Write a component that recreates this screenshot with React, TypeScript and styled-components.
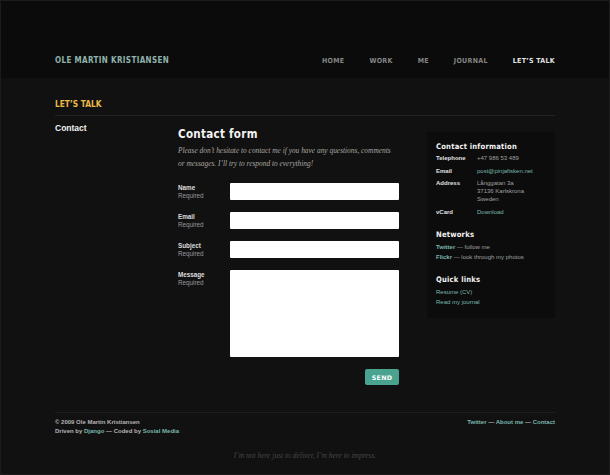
import React from 'react'
import styled, { createGlobalStyle } from 'styled-components'

const GlobalStyle = createGlobalStyle`
  html, body {
    margin: 0;
    padding: 0;
    background: #111111;
  }
  body {
    font-family: "Liberation Sans", Arial, sans-serif;
    color: #cccccc;
  }
  a {
    text-decoration: none;
  }
`

const Page = styled.div`
  width: 610px;
  height: 475px;
  box-sizing: border-box;
  border: 1px solid #1c1c1c;
  background: #111111;
  overflow: hidden;
`

const Header = styled.header`
  height: 77px;
  background: #0b0b0b;
  padding: 0 54px 12px;
  display: flex;
  align-items: flex-end;
  justify-content: space-between;
  box-sizing: border-box;
  line-height: 10px;
`

const Logo = styled.div`
  font-family: "DejaVu Sans Condensed", "DejaVu Sans", sans-serif;
  font-weight: bold;
  font-size: 8px;
  letter-spacing: 0.35px;
  color: #8fb3ab;
`

const Nav = styled.nav`
  display: flex;
  gap: 25px;
`

const NavItem = styled.a<{ $active?: boolean }>`
  font-family: "DejaVu Sans Condensed", "DejaVu Sans", sans-serif;
  font-weight: bold;
  font-size: 7px;
  letter-spacing: 0.3px;
  color: ${p => (p.$active ? '#e2e2e2' : '#858585')};
`

const Main = styled.main`
  padding: 0 54px;
`

const SectionTitle = styled.h1`
  margin: 0;
  padding: 21px 0 6px;
  line-height: 10px;
  font-family: "DejaVu Sans Condensed", "DejaVu Sans", sans-serif;
  font-weight: 900;
  font-size: 8.3px;
  color: #e9b949;
  border-bottom: 1px solid #222222;
`

const Columns = styled.div`
  display: grid;
  grid-template-columns: 123px 221px 1fr;
  align-items: start;
  padding-top: 7px;
`

const SubNav = styled.div`
  font-weight: bold;
  font-size: 8.5px;
  line-height: 10px;
  color: #f0f0f0;
`

const FormCol = styled.div`
  display: flex;
  flex-direction: column;
`

const FormTitle = styled.h2`
  margin: 4px 0 0;
  line-height: 14px;
  font-family: "DejaVu Sans Condensed", "DejaVu Sans", sans-serif;
  font-weight: bold;
  font-size: 11.5px;
  letter-spacing: 0.3px;
  color: #f4f4f4;
`

const Intro = styled.p`
  margin: 3px 0 13px;
  font-family: "Liberation Serif", "Times New Roman", serif;
  font-style: italic;
  font-size: 7.4px;
  line-height: 13px;
  color: #a9a5a0;
`

const Field = styled.div`
  display: grid;
  grid-template-columns: 52px 169px;
  align-items: start;
  margin-bottom: 12px;
`

const LabelBox = styled.label`
  display: flex;
  flex-direction: column;
  padding-top: 1px;
`

const LabelName = styled.span`
  font-weight: bold;
  font-size: 6.3px;
  line-height: 8px;
  color: #dddddd;
`

const LabelNote = styled.span`
  font-size: 6.3px;
  line-height: 8px;
  color: #9a9a9a;
`

const Input = styled.div<{ $height: number }>`
  height: ${p => p.$height}px;
  background: #ffffff;
  border-radius: 1px;
`

const Actions = styled.div`
  display: flex;
  justify-content: flex-end;
`

const SendButton = styled.button`
  width: 34px;
  height: 16px;
  border: none;
  border-radius: 2px;
  background: #4aa38f;
  color: #ffffff;
  font-family: "DejaVu Sans", sans-serif;
  font-weight: bold;
  font-size: 6.3px;
  letter-spacing: 0.3px;
  padding: 0;
`

const Sidebar = styled.aside`
  justify-self: end;
  width: 128px;
  margin-top: 9px;
  background: #0c0c0c;
  padding: 10px 9px 0;
  height: 186px;
  box-sizing: border-box;
`

const SideTitle = styled.h3`
  margin: 0;
  line-height: 9px;
  font-family: "DejaVu Sans Condensed", "DejaVu Sans", sans-serif;
  font-weight: bold;
  font-size: 7.6px;
  letter-spacing: 0.2px;
  color: #f2f2f2;
`

const InfoTable = styled.div`
  display: grid;
  grid-template-columns: 41px 1fr;
  row-gap: 4.5px;
  margin: 3px 0 14px;
`

const InfoKey = styled.span`
  font-weight: bold;
  font-size: 6px;
  line-height: 8px;
  color: #e0e0e0;
`

const InfoValue = styled.span`
  font-size: 6px;
  line-height: 8px;
  color: #a0a0a0;
`

const Link = styled.a`
  color: #7ab6ac;
`

const BoldLink = styled.a`
  color: #7ab6ac;
  font-weight: bold;
`

const SideList = styled.div`
  display: flex;
  flex-direction: column;
  gap: 2.5px;
  margin-top: 4px;
`

const SideLine = styled.div`
  font-size: 6px;
  line-height: 8px;
  color: #a0a0a0;
`

const SideGroup = styled.div`
  margin-bottom: 13.5px;
`

const Footer = styled.footer`
  margin: 27px 54px 0;
  border-top: 1px solid #1e1e1e;
  padding-top: 5px;
  display: flex;
  justify-content: space-between;
  font-weight: bold;
  font-size: 6px;
  line-height: 9px;
  color: #b4b4b4;
`

const Tagline = styled.p`
  margin: 15px 0 0;
  line-height: 9px;
  text-align: center;
  font-family: "Liberation Serif", "Times New Roman", serif;
  font-style: italic;
  font-size: 7.5px;
  color: #474747;
`

const fields = [
  { name: 'Name', height: 17 },
  { name: 'Email', height: 17 },
  { name: 'Subject', height: 17 },
  { name: 'Message', height: 87 },
]

const App = () => {
  return (
    <>
      <GlobalStyle />
      <Page>
        <Header>
          <Logo>OLE MARTIN KRISTIANSEN</Logo>
          <Nav>
            <NavItem>HOME</NavItem>
            <NavItem>WORK</NavItem>
            <NavItem>ME</NavItem>
            <NavItem>JOURNAL</NavItem>
            <NavItem $active>LET’S TALK</NavItem>
          </Nav>
        </Header>
        <Main>
          <SectionTitle>LET’S TALK</SectionTitle>
          <Columns>
            <SubNav>Contact</SubNav>
            <FormCol>
              <FormTitle>Contact form</FormTitle>
              <Intro>
                Please don’t hesitate to contact me if you have any questions, comments or messages. I’ll try to respond to everything!
              </Intro>
              {fields.map(f => (
                <Field key={f.name}>
                  <LabelBox>
                    <LabelName>{f.name}</LabelName>
                    <LabelNote>Required</LabelNote>
                  </LabelBox>
                  <Input $height={f.height} />
                </Field>
              ))}
              <Actions>
                <SendButton>SEND</SendButton>
              </Actions>
            </FormCol>
            <Sidebar>
              <SideTitle>Contact information</SideTitle>
              <InfoTable>
                <InfoKey>Telephone</InfoKey>
                <InfoValue>+47 986 53 489</InfoValue>
                <InfoKey>Email</InfoKey>
                <InfoValue><Link>post@pinjafisken.net</Link></InfoValue>
                <InfoKey>Address</InfoKey>
                <InfoValue>Långgatan 3a<br />37136 Karlskrona<br />Sweden</InfoValue>
                <InfoKey>vCard</InfoKey>
                <InfoValue><Link>Download</Link></InfoValue>
              </InfoTable>
              <SideGroup>
                <SideTitle>Networks</SideTitle>
                <SideList>
                  <SideLine><BoldLink>Twitter</BoldLink> — follow me</SideLine>
                  <SideLine><BoldLink>Flickr</BoldLink> — look through my photos</SideLine>
                </SideList>
              </SideGroup>
              <SideTitle>Quick links</SideTitle>
              <SideList>
                <SideLine><Link>Resume (CV)</Link></SideLine>
                <SideLine><Link>Read my journal</Link></SideLine>
              </SideList>
            </Sidebar>
          </Columns>
        </Main>
        <Footer>
          <div>
            © 2009 Ole Martin Kristiansen<br />
            Driven by <Link>Django</Link> — Coded by <Link>Sosial Media</Link>
          </div>
          <div>
            <Link>Twitter</Link> — <Link>About me</Link> — <Link>Contact</Link>
          </div>
        </Footer>
        <Tagline>I’m not here just to deliver, I’m here to impress.</Tagline>
      </Page>
    </>
  )
}

export default App
